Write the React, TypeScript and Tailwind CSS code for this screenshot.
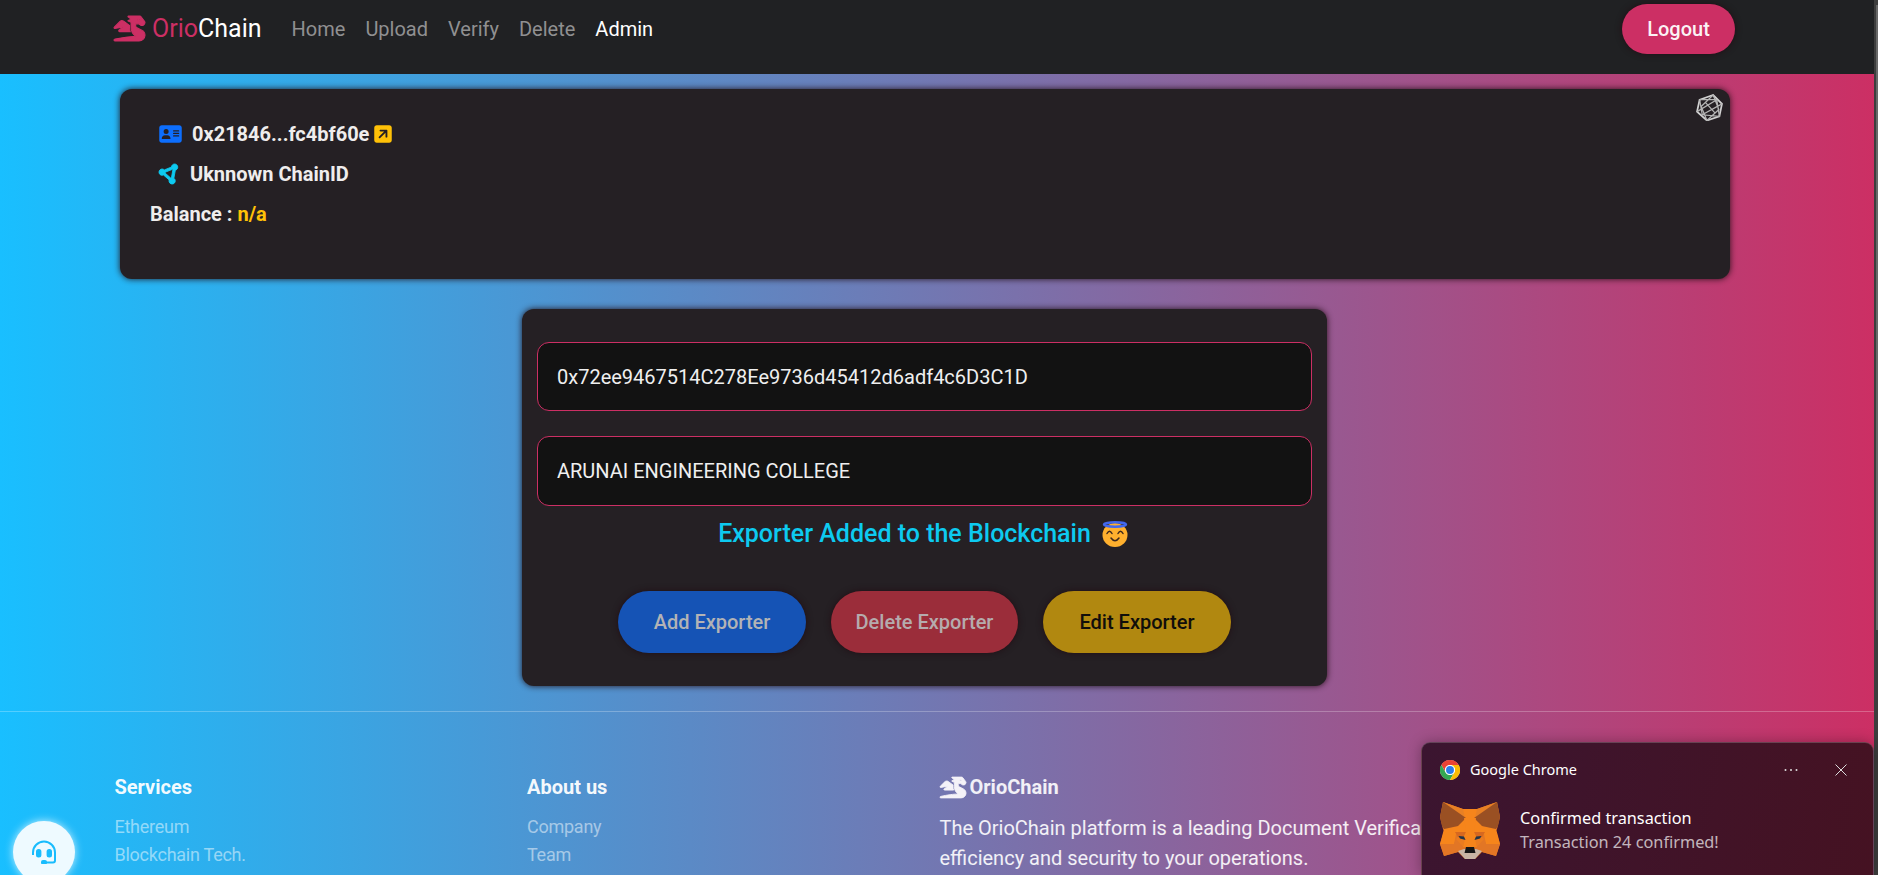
import React from "react";
import { FaAddressCard, FaCircleNodes, FaSquareArrowUpRight } from "react-icons/fa6";
import { FaDragon } from "react-icons/fa";

const navLinks = ["Home", "Upload", "Verify", "Delete"];

function FooterColumn({ title, links }: { title: string; links: string[] }) {
  return (
    <div className="w-[412.5px] shrink-0">
      <h5 className="text-[20px] leading-6 font-bold text-white/95">{title}</h5>
      <ul className="mt-[14px] text-[18px] leading-7 tracking-[-0.25px] text-white/50">
        {links.map((l) => (
          <li key={l}>{l}</li>
        ))}
      </ul>
    </div>
  );
}

function Polyhedron() {
  return (
    <svg viewBox="0 0 26 26" className="absolute top-[5px] right-[7px] h-[27px] w-[27px]" fill="none" stroke="#d2d2d2">
      <path strokeWidth="1.700" d="M3.500 5.500L16.500 1L25 9.500L22.500 21.500L10.500 25.500L1 17Z" />
      <path strokeWidth="1.200" stroke="#b5b5b5" d="M3.500 5.500L20 5.500L22.500 21.500L6 20L3.500 5.500M16.500 1L5 12L10.500 25.500L22 15L16.500 1M1 17L20 5.500M25 9.500L6 20M9 8L18 18" />
    </svg>
  );
}

function ChromeLogo() {
  return (
    <svg viewBox="0 0 48 48" className="h-5 w-5">
      <circle cx="24" cy="24" r="24" fill="#fff" />
      <path fill="#ea4335" d="M3.200 12A24 24 0 0 1 44.800 12H24A12 12 0 0 0 13.600 30Z" />
      <path fill="#34a853" d="M3.200 12A24 24 0 0 0 24 48L34.400 30A12 12 0 0 1 13.600 30Z" />
      <path fill="#fbbc04" d="M44.800 12A24 24 0 0 1 24 48L34.400 30A12 12 0 0 0 24 12Z" />
      <circle cx="24" cy="24" r="12" fill="#fff" />
      <circle cx="24" cy="24" r="9.500" fill="#2b7de9" />
    </svg>
  );
}

function Fox() {
  return (
    <svg viewBox="0 0 60 58" className="h-[58px] w-[60px]">
      <path fill="#e27625" d="M3 1L23 8H37L57 1L60 16L57 28L56 30L60 43L56 55L42 51L35 58H25L18 51L4 55L0 43L4 30L3 28L0 16Z" />
      <path fill="#f6851b" d="M23 8H37L42 25L56 28L58 35L60 43H46L44 33L36 31L37 46H23L24 31L16 33L14 43H0L4 28L18 25Z" />
      <path fill="#e88024" d="M3 1L23 8L25 17ZM57 1L37 8L35 17Z" />
      <path fill="#9a5023" d="M3 1L26 17L18 25L4 28L2 25L0 16ZM57 1L34 17L42 25L56 28L58 25L60 16Z" />
      <path fill="#d7681f" d="M15 31L26 31L23 37L18 36ZM45 31L34 31L37 37L42 36Z" />
      <path fill="#ea7c20" d="M18 36L25 38L23 46L15 39ZM42 36L35 38L37 46L45 39Z" />
      <path fill="#e27625" d="M0 43H14L18 51L4 55ZM60 43H46L42 51L56 55ZM14 43L16 38L23 46L18 51ZM46 43L44 38L37 46L42 51Z" />
      <path fill="#f6851b" d="M24 17H36L34 31L36 46H24L26 31Z" />
      <path fill="#233447" d="M18.500 35L24 35.500L25.500 39L20 37.500ZM41.500 35L36 35.500L34.500 39L40 37.500Z" />
      <path fill="#c9b5a5" d="M18 50L24 48H36L42 50L35 58H25Z" />
      <path fill="#161616" d="M26 46H34L35.500 52H24.500Z" />
    </svg>
  );
}

function Headset() {
  return (
    <svg viewBox="0 0 24 24" className="h-6 w-6" fill="none" stroke="#19bcfd" strokeWidth="2">
      <path d="M1 15V12.500a11 11 0 0 1 22 0V20.500a2 2 0 0 1-2 2H12" />
      <rect x="5" y="10" width="3.400" height="6.400" rx="1.500" fill="#19bcfd" stroke="#19bcfd" />
      <rect x="15.600" y="10" width="3.400" height="6.400" rx="1.500" fill="#19bcfd" stroke="#19bcfd" />
      <rect x="10" y="21" width="4" height="2.500" rx="1" fill="#19bcfd" />
    </svg>
  );
}

const shadow = "shadow-[0_0_6px_rgba(33,14,20,0.95)]";

export default function App() {
  return (
    <div className="relative flex h-[875px] w-[1878px] overflow-hidden font-['Roboto',sans-serif]">
      <div className="flex w-[1874px] flex-col bg-[linear-gradient(90deg,#19bfff_0%,#cc2f64_100%)]">
        <header className="flex h-[74px] items-start bg-[#202123] pr-[139px] pl-[114px]">
          <div className="flex h-14 flex-1 items-center">
            <FaDragon className="h-[25px] w-[31px] overflow-visible stroke-[22px] text-[#cc2f64]" />
            <span className="ml-[7px] pt-px text-[25px] leading-8 text-[#cc2f64]">
              Orio<span className="text-white">Chain</span>
            </span>
            <nav className="ml-[30px] flex gap-5 pt-[2px] text-[20px] leading-6 text-[#909091]">
              {navLinks.map((n) => (
                <a key={n}>{n}</a>
              ))}
              <a className="text-white">Admin</a>
            </nav>
          </div>
          <button className={`mt-1 h-[50px] w-[113px] rounded-[25px] bg-[#cc2f64] text-[20px] font-medium text-white/95 ${shadow}`}>Logout</button>
        </header>

        <section className={`relative mt-[15px] ml-[120px] flex h-[190px] w-[1610px] flex-col rounded-[12px] bg-[#252024] pt-[25px] pl-[30px] text-[20px] font-bold text-[#efeded] ${shadow}`}>
          <Polyhedron />
          <div className="flex h-10 items-center pl-[9px]">
            <FaAddressCard className="h-5 w-[23px] text-[#0d6efd]" />
            <span className="ml-[10px]">0x21846...fc4bf60e</span>
            <FaSquareArrowUpRight className="ml-[5px] h-5 w-[18px] text-[#ffc107]" />
          </div>
          <div className="flex h-10 items-center pl-[9px]">
            <FaCircleNodes className="h-5 w-5 overflow-visible stroke-[22px] text-[#0dcaf0]" />
            <span className="ml-[11px]">Uknnown ChainID</span>
          </div>
          <div className="flex h-10 items-center">
            <span>Balance : <span className="text-[#ffc107]">n/a</span></span>
          </div>
        </section>

        <main className={`mt-[30px] ml-[522px] flex h-[377px] w-[805px] flex-col items-center rounded-[12px] bg-[#252024] px-[15px] pt-[33px] ${shadow}`}>
          <div className="flex h-[69px] w-full items-center rounded-[12px] border border-[#cc2f64] bg-[#121212] px-[19px] text-[20px] text-[#efefef]">0x72ee9467514C278Ee9736d45412d6adf4c6D3C1D</div>
          <div className="mt-[25px] flex h-[70px] w-full items-center rounded-[12px] border border-[#cc2f64] bg-[#121212] px-[19px] text-[20px] text-[#efefef]">ARUNAI ENGINEERING COLLEGE</div>
          <h5 className="mt-[13px] mr-[3px] flex h-[30px] items-center text-[25px] font-medium text-[#0dcaf0]">
            Exporter Added to the Blockchain
            <svg viewBox="0 0 26 26" className="ml-[11px] h-[26px] w-[26px]">
              <ellipse cx="13" cy="14" rx="12.500" ry="12" fill="#ffb02e" />
              <ellipse cx="13" cy="3.500" rx="11" ry="2.200" fill="none" stroke="#4268ed" strokeWidth="2.500" />
              <g fill="none" stroke="#3f291c" strokeWidth="1.500" strokeLinecap="round">
                <path d="M5 12.500Q7.500 8 10 12.500M16 12.500Q18.500 8 21 12.500M9 17Q13 22.500 17 17" />
              </g>
            </svg>
          </h5>
          <div className="mt-[42px] flex gap-[25px] text-[20px] font-medium">
            <button className={`h-[62px] w-[188px] rounded-[31px] bg-[#1553b5] text-[#b3b3b5] ${shadow}`}>Add Exporter</button>
            <button className={`h-[62px] w-[187px] rounded-[31px] bg-[#9b2d3a] text-[#b5abad] ${shadow}`}>Delete Exporter</button>
            <button className={`h-[62px] w-[188px] rounded-[31px] bg-[#b18810] text-[#100e0b] ${shadow}`}>Edit Exporter</button>
          </div>
        </main>

        <footer className="mt-[25px] flex flex-1 border-t border-white/25 pt-[63px] pl-[114.5px]">
          <FooterColumn title="Services" links={["Ethereum", "Blockchain Tech."]} />
          <FooterColumn title="About us" links={["Company", "Team"]} />
          <div className="w-[560px] shrink-0 text-white/90">
            <h5 className="flex items-center text-[20px] leading-6 font-bold">
              <FaDragon className="mr-[4px] h-[21px] w-[26px] overflow-visible stroke-[22px] text-[#f4f2f8]" />
              OrioChain
            </h5>
            <p className="mt-[14px] text-[20px] leading-[30px] whitespace-nowrap">
              The OrioChain platform is a leading Document Verification
              <br />
              efficiency and security to your operations.
            </p>
          </div>
        </footer>
      </div>
      <div className="flex w-1 bg-[#3d3d3d] pt-[5px]">
        <div className="ml-[2px] h-[625px] w-[2px] bg-[#686868]" />
      </div>

      <div className="absolute top-[821px] left-[13px] flex h-[62px] w-[62px] items-center justify-center rounded-full bg-[#eefaff] shadow-[0_0_8px_#c8f0ff]">
        <Headset />
      </div>

      <aside className="absolute top-[742px] left-[1421px] flex h-[133px] w-[453px] flex-col rounded-t-[9px] border border-b-0 border-white/20 bg-[linear-gradient(100deg,#3b1530,#451222)] pt-[17px] pl-[18px] font-['Noto_Sans','Open_Sans',sans-serif] text-white shadow-[0_0_14px_rgba(0,0,0,0.3)]">
        <div className="flex h-5 items-center pr-[26px] text-[14.5px]">
          <ChromeLogo />
          <span className="ml-[10px] flex-1">Google Chrome</span>
          <svg viewBox="0 0 14 4" className="h-1 w-[14px]" fill="#ddd">
            <circle cx="1.500" cy="2" r="1" />
            <circle cx="7" cy="2" r="1" />
            <circle cx="12.500" cy="2" r="1" />
          </svg>
          <svg viewBox="0 0 12 12" className="ml-[37px] h-3 w-3" stroke="#ddd">
            <path d="M.5 .5L11.500 11.500M11.500 .5L.5 11.500" />
          </svg>
        </div>
        <div className="mt-[21px] flex">
          <Fox />
          <div className="ml-5 pt-[5px] text-[16.3px] leading-6">
            <div>Confirmed transaction</div>
            <div className="text-white/70">Transaction 24 confirmed!</div>
          </div>
        </div>
      </aside>
    </div>
  );
}
